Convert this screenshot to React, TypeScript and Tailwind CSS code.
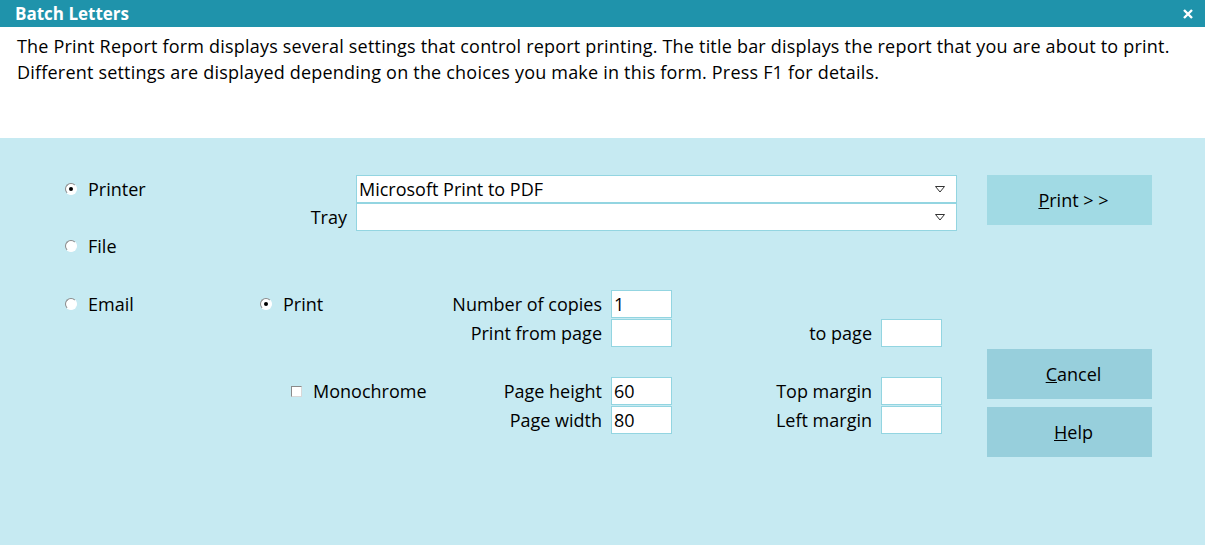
import React from "react";

const font = { fontFamily: '"Open Sans", "Noto Sans", sans-serif' };

function Radio({ checked, label }: { checked?: boolean; label: string }) {
  return (
    <div className="flex items-center h-[28px]">
      <span className="w-[12px] h-[12px] rounded-full bg-white border border-t-[#8a8a8a] border-l-[#8a8a8a] border-r-white border-b-white shrink-0 flex items-center justify-center">
        {checked && <span className="w-[4px] h-[4px] rounded-full bg-black" />}
      </span>
      <span className="ml-[11px] text-[18px] text-black">{label}</span>
    </div>
  );
}

function Box({ value }: { value?: string }) {
  return (
    <div className="w-[61px] h-[28px] bg-white border border-[#93d5e1] flex items-center pl-[2px] text-[18px] text-black">
      {value}
    </div>
  );
}

function Combo({ value }: { value?: string }) {
  return (
    <div className="w-[601px] h-[28px] bg-white border border-[#93d5e1] flex items-center justify-between pl-[2px] pr-[11px] text-[18px] text-black">
      <span>{value}</span>
      <svg width="10" height="7" viewBox="0 0 10 7">
        <path d="M0.5 0.5 H9.5 L5 6 Z" fill="none" stroke="#333" strokeWidth="1" />
      </svg>
    </div>
  );
}

function Label({ text, width }: { text: string; width: string }) {
  return <div className={`${width} h-[28px] flex items-center justify-end pr-[9px] text-[18px] text-black`}>{text}</div>;
}

export default function App() {
  return (
    <div className="w-[1205px] h-[545px] flex flex-col bg-[#c6eaf2] overflow-hidden" style={font}>
      <div className="h-[27px] bg-[#1f93ab] flex items-center justify-between pl-[15px] pr-[12px] shrink-0">
        <span className="text-white font-bold text-[17px]">Batch Letters</span>
        <svg width="10" height="10" viewBox="0 0 10 10">
          <path d="M1 1 L9 9 M9 1 L1 9" stroke="white" strokeWidth="2.4" />
        </svg>
      </div>

      <div className="h-[111px] bg-white pl-[17px] pt-[6px] text-[18px] leading-[26px] tracking-[0.2px] text-black shrink-0">
        <p>
          The Print Report form displays several settings that control report printing. The title bar displays the report
          that you are about to print.
        </p>
        <p>Different settings are displayed depending on the choices you make in this form. Press F1 for details.</p>
      </div>

      <div className="flex pt-[37px]">
        <div className="w-[987px] shrink-0">
          <div className="flex pl-[65px]">
            <div className="w-[282px] flex flex-col">
              <Radio checked label="Printer" />
              <div className="h-[28px] flex items-center justify-end text-[18px] text-black">Tray</div>
            </div>
            <div className="ml-[9px] flex flex-col">
              <Combo value="Microsoft Print to PDF" />
              <Combo />
            </div>
          </div>

          <div className="pl-[65px] mt-[1px]">
            <Radio label="File" />
          </div>

          <div className="flex pl-[65px] mt-[30px]">
            <div className="w-[195px]">
              <Radio label="Email" />
            </div>
            <div className="w-[180px]">
              <Radio checked label="Print" />
            </div>
            <div className="flex flex-col gap-[1px]">
              <div className="flex">
                <Label text="Number of copies" width="w-[171px]" />
                <Box value="1" />
              </div>
              <div className="flex">
                <Label text="Print from page" width="w-[171px]" />
                <Box />
              </div>
            </div>
            <div className="flex flex-col gap-[1px]">
              <div className="h-[28px]" />
              <div className="flex">
                <Label text="to page" width="w-[209px]" />
                <Box />
              </div>
            </div>
          </div>

          <div className="flex pl-[65px] mt-[30px]">
            <div className="w-[195px]" />
            <div className="w-[180px] pl-[31px]">
              <div className="flex items-center h-[28px]">
                <span className="w-[11px] h-[11px] bg-white border border-t-[#8a8a8a] border-l-[#8a8a8a] border-r-[#d8d8d8] border-b-[#d8d8d8] shrink-0" />
                <span className="ml-[11px] text-[18px] text-black">Monochrome</span>
              </div>
            </div>
            <div className="flex flex-col gap-[1px]">
              <div className="flex">
                <Label text="Page height" width="w-[171px]" />
                <Box value="60" />
              </div>
              <div className="flex">
                <Label text="Page width" width="w-[171px]" />
                <Box value="80" />
              </div>
            </div>
            <div className="flex flex-col gap-[1px]">
              <div className="flex">
                <Label text="Top margin" width="w-[209px]" />
                <Box />
              </div>
              <div className="flex">
                <Label text="Left margin" width="w-[209px]" />
                <Box />
              </div>
            </div>
          </div>
        </div>

        <div className="flex flex-col w-[165px]">
          <button className="h-[50px] pl-[8px] bg-[#a1dae4] text-[18px] text-black">
            <span className="underline">P</span>rint &gt; &gt;
          </button>
          <button className="h-[50px] pl-[8px] mt-[124px] bg-[#97cfdc] text-[18px] text-black">
            <span className="underline">C</span>ancel
          </button>
          <button className="h-[50px] pl-[8px] mt-[8px] bg-[#97cfdc] text-[18px] text-black">
            <span className="underline">H</span>elp
          </button>
        </div>
      </div>
    </div>
  );
}
